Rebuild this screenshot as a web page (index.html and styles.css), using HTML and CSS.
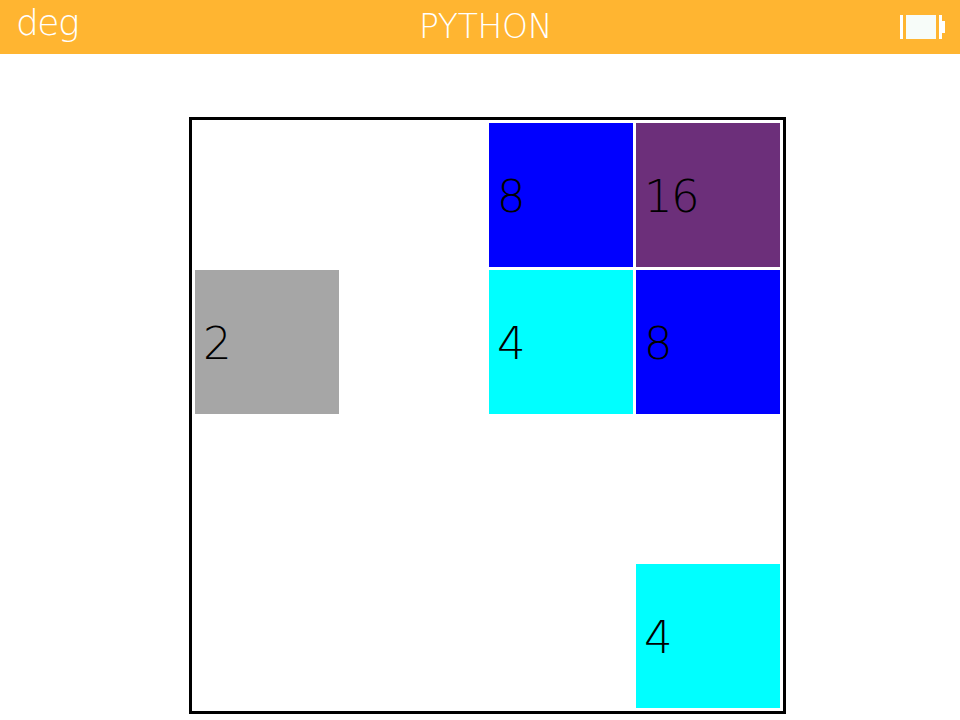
FILE: index.html
```html
<!DOCTYPE html>
<html lang="en">
<head>
    <meta charset="UTF-8">
    <title>Python 2048</title>
    <link rel="stylesheet" href="styles.css">
</head>
<body>
    <div class="topbar">
        <span class="angle">deg</span>
        <span class="title">PYTHON</span>
        <svg class="battery" width="45" height="24" viewBox="0 0 45 24">
            <rect x="0" y="0" width="3" height="24" fill="#fff"/>
            <rect x="6" y="0" width="30" height="24" fill="#f7fcf9"/>
            <rect x="39" y="0" width="3" height="24" fill="#fff"/>
            <rect x="42" y="6" width="3" height="12" fill="#fff"/>
        </svg>
    </div>

    <div class="board">
        <div class="cell"></div>
        <div class="cell"></div>
        <div class="cell blue">8</div>
        <div class="cell purple">16</div>

        <div class="cell gray">2</div>
        <div class="cell"></div>
        <div class="cell cyan">4</div>
        <div class="cell blue">8</div>

        <div class="cell"></div>
        <div class="cell"></div>
        <div class="cell"></div>
        <div class="cell"></div>

        <div class="cell"></div>
        <div class="cell"></div>
        <div class="cell"></div>
        <div class="cell cyan">4</div>
    </div>
</body>
</html>
```

FILE: styles.css
```css
body {
    margin: 0;
    background: #fff;
    font-family: "DejaVu Sans", sans-serif;
    font-weight: 200;
}
.topbar {
    height: 54px;
    background-color: #ffb531;
    color: #fff;
    display: grid;
    grid-template-columns: 1fr auto 1fr;
    align-items: center;
    padding: 0 15px 0 16px;
}
.angle {
    font-size: 36px;
    line-height: 46px;
    letter-spacing: -1.5px;
    align-self: start;
}
.title {
    font-size: 33px;
    line-height: 54px;
    letter-spacing: -0.3px;
    margin-left: 10px;
}
.battery {
    justify-self: end;
}
.board {
    width: 597px;
    height: 597px;
    box-sizing: border-box;
    margin: 63px 0 0 189px;
    padding: 3px;
    border: 3px solid #000;
    display: grid;
    grid-template-columns: repeat(4, 144px);
    grid-template-rows: repeat(4, 144px);
    gap: 3px;
}
.cell {
    display: flex;
    align-items: center;
    padding: 3px 0 0 8px;
    font-size: 45px;
    letter-spacing: -1.6px;
    color: #000;
}
.gray {
    background-color: #a6a6a6;
}
.cyan {
    background-color: #00ffff;
}
.blue {
    background-color: #0000ff;
}
.purple {
    background-color: #6c2f7a;
}
```
